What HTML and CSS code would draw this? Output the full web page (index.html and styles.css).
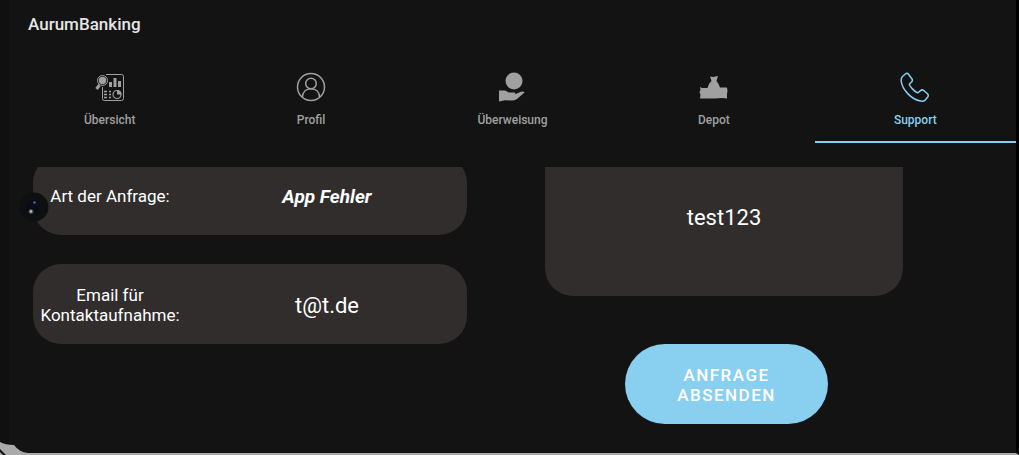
FILE: index.html
```html
<!DOCTYPE html>
<html lang="de">
<head>
<meta charset="utf-8">
<meta name="viewport" content="width=device-width, initial-scale=1">
<title>AurumBanking</title>
<link rel="stylesheet" href="styles.css">
</head>
<body>
<div class="screen">
  <header class="app-bar"><h1 class="app-title">AurumBanking</h1></header>
  <nav class="tabs">
    <a class="tab" href="#uebersicht">
      <svg class="tab-icon" viewBox="0 0 30 30" fill="none" stroke="currentColor">
        <path d="M11 2.5H26.5Q28.500 2.500 28.500 4.500V26.500Q28.500 28.500 26.500 28.500H9.500Q7.500 28.500 7.500 26.500V15" stroke-width="1"/>
        <circle cx="7.500" cy="8.500" r="5" stroke-width="1"/>
        <circle cx="7.500" cy="8.500" r="3.700" fill="currentColor" stroke="none"/>
        <path d="M4.500 13L1.500 17" stroke-width="3"/>
        <path d="M14 10h3v5h-3zM18.500 6h3v9h-3zM23 9h3v6h-3z" fill="currentColor" stroke="none"/>
        <path d="M9 19.500h3M9 22.500h3M9 25.500h3M14 19.500h2M14 22.500h2M14 25.500h2" stroke-width="1.500"/>
        <circle cx="22" cy="22.500" r="4" stroke-width="1.200"/>
        <path d="M22 22.500V18a4.500 4.500 0 0 1 4.500 4.500z" fill="currentColor" stroke="none"/>
      </svg>
      <span>Übersicht</span>
    </a>
    <a class="tab" href="#profil">
      <svg class="tab-icon" viewBox="0 0 30 30" fill="none" stroke="currentColor" stroke-width="1.500">
        <circle cx="15" cy="15" r="13.500"/>
        <circle cx="15" cy="11.500" r="5.300"/>
        <path d="M6.500 25.500C6.500 20 10 16.800 15 16.800S23.500 20 23.500 25.500"/>
      </svg>
      <span>Profil</span>
    </a>
    <a class="tab" href="#ueberweisung">
      <svg class="tab-icon" viewBox="0 0 30 30" fill="currentColor">
        <circle cx="17" cy="9" r="8.500"/>
        <path d="M2 18.500H8L12 20.500H18Q19 21.500 17.500 22.500L24 19.700Q27 19 27.500 20.500L20 27Q17 29 13 28.500L8 28.300 2 29.500z"/>
      </svg>
      <span>Überweisung</span>
    </a>
    <a class="tab" href="#depot">
      <svg class="tab-icon" viewBox="0 0 30 30" fill="currentColor">
        <path d="M11 4.500L14 5 19 4 17.500 9Q20 12 21 15.500H28L28.500 19 28 22V26.500L23 26 16 26.500H1L1.500 23 .500 20 1.500 18 1 15 3 16H8.500Q9 12 12.500 9z"/>
      </svg>
      <span>Depot</span>
    </a>
    <a class="tab tab-active" href="#support" aria-current="page">
      <svg class="tab-icon" viewBox="0 0 30 30" fill="none" stroke="currentColor" stroke-width="1.500" stroke-linejoin="round">
        <path d="M6 1.500Q7.500 1 8.500 2.300L12 7Q13 8.500 11.500 10L9.500 12C8.500 13.500 15.500 20.500 18 20.800L20.500 18.600Q22 17.300 23.500 18.300L27.500 21.800Q29 23.300 27.500 25.300L25 28.300Q23.500 29.500 20.500 29C11.500 27.700 2 17.300 1.200 9Q1 6 2.500 4.500z"/>
      </svg>
      <span>Support</span>
    </a>
  </nav>
  <main class="content">
    <form class="form">
      <div class="column">
        <div class="card">
          <label class="label" for="art">Art der Anfrage:</label>
          <select class="field field-select" id="art"><option>App Fehler</option></select>
        </div>
        <div class="card">
          <label class="label" for="email">Email für Kontaktaufnahme:</label>
          <input class="field" id="email" type="email" value="t@t.de">
        </div>
      </div>
      <div class="column column-message">
        <textarea class="message" rows="1" aria-label="Nachricht">test123</textarea>
        <button class="submit" type="button">ANFRAGE ABSENDEN</button>
      </div>
    </form>
  </main>
  <svg class="camera" viewBox="0 0 30 30" aria-hidden="true">
    <circle cx="15" cy="15" r="14.500" fill="#0e0f10"/>
    <circle cx="14" cy="15" r="7" fill="#0a0b14"/>
    <circle cx="15.500" cy="10.500" r="1.200" fill="#2d78a8"/>
    <circle cx="12" cy="19.500" r="2.500" fill="#354444"/>
    <circle cx="12" cy="19.500" r="1.400" fill="#b0b3bc"/>
  </svg>
  <svg class="corner" viewBox="0 0 28 13" aria-hidden="true">
    <path d="M0 0Q5 3 14 3Q19 10 28 11V13H0z" fill="#aaa"/>
    <path d="M0 7L6 13H3L0 10z" fill="#111"/>
  </svg>
</div>
</body>
</html>
```
FILE: styles.css
```css
* {
  box-sizing: border-box;
}

body {
  margin: 0;
  background: #131313;
  color: #fff;
  font-family: Roboto, "Liberation Sans", sans-serif;
}

.screen {
  position: relative;
  display: flex;
  flex-direction: column;
  height: 100vh;
  border-left: 9px solid #101010;
  border-right: 3px solid #000;
  border-bottom: 2px solid #aaa;
}

.app-bar {
  padding: 12px 19px 14px;
}

.app-title {
  margin: 0;
  color: #e6e6e6;
  font-size: 17px;
  font-weight: 500;
  line-height: 24px;
}

.tabs {
  display: grid;
  grid-template-columns: repeat(5, 1fr);
}

.tab {
  display: flex;
  flex-direction: column;
  align-items: center;
  gap: 10px;
  padding: 22px 0 13px;
  border-bottom: 2px solid transparent;
  color: #a0a0a0;
  font-size: 12px;
  font-weight: 500;
  line-height: 16px;
  text-decoration: none;
}

.tab-active {
  border-color: #89cff0;
  color: #89cff0;
}

.tab-icon {
  width: 30px;
  height: 30px;
}

.content {
  flex: 1;
  min-height: 0;
  margin-top: 24px;
  overflow: hidden;
}

.form {
  display: grid;
  grid-template-columns: 434fr 358fr;
  gap: 78px;
  padding: 0 113px 0 24px;
}

.column {
  display: flex;
  flex-direction: column;
  gap: 29px;
  margin-top: -12px;
}

.column-message {
  align-items: flex-start;
  gap: 48px;
  margin-top: -29px;
}

.card {
  display: grid;
  grid-template-columns: 154px 1fr;
  align-items: center;
  height: 80px;
  padding-top: 2px;
  border-radius: 28px;
  background: #312d2d;
}

.label {
  font-size: 17px;
  line-height: 20px;
  text-align: center;
}

.field,
.message {
  border: 0;
  outline: 0;
  background: transparent;
  color: #fff;
  font-family: inherit;
  font-size: 22px;
  text-align: center;
}

.field {
  width: 100%;
  height: 48px;
  padding: 0;
}

.field-select {
  appearance: none;
  font-size: 19px;
  font-style: italic;
  font-weight: 700;
  text-align-last: center;
}

.message {
  width: 100%;
  height: 158px;
  padding: 67px 16px;
  border-radius: 28px;
  background: #312d2d;
  line-height: 26px;
  resize: none;
  overflow: hidden;
}

.submit {
  width: 203px;
  height: 80px;
  margin-left: 80px;
  padding: 2px 48px 0;
  border: 0;
  border-radius: 40px;
  background: #89cff0;
  color: #fff;
  font-family: inherit;
  font-size: 17px;
  font-weight: 500;
  letter-spacing: 1.5px;
  line-height: 20px;
}

.camera {
  position: absolute;
  top: 192px;
  left: 10px;
  width: 30px;
  height: 30px;
}

.corner {
  position: absolute;
  bottom: -2px;
  left: -9px;
  width: 28px;
  height: 13px;
}
```
